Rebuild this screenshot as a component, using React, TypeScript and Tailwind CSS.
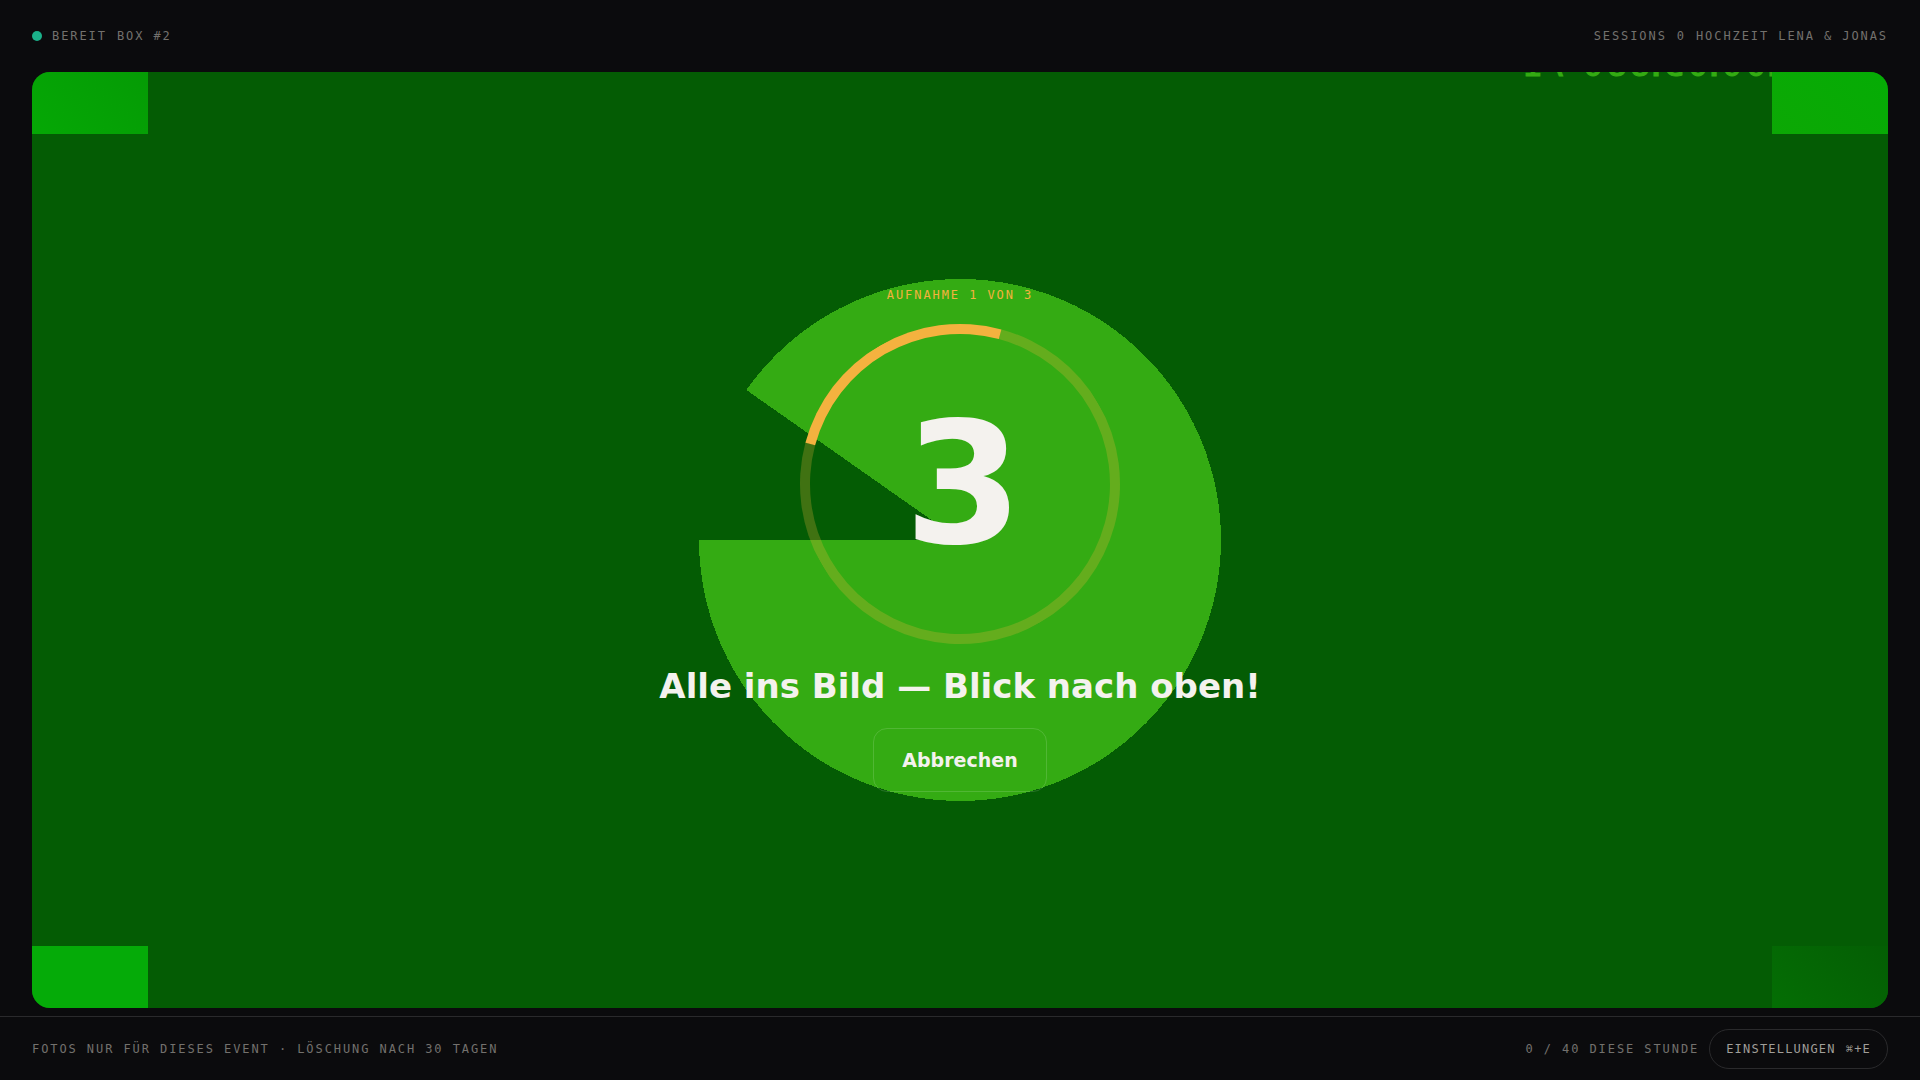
// Clock burned into the feed, one x per character because the digits are spaced wider than the separators
const CLOCK = "0:00:05.880 71";
const CLOCK_X = "-1787 -1772 -1756 -1732 -1714 -1698 -1674 -1656 -1640 -1617 -1593 -1575 -1558 -1534";

function CameraFeed() {
  return (
    <>
      {/* Mirrored clock, mostly cropped by the top edge */}
      <svg
        className="absolute top-0 right-0 h-2 w-[380px]"
        viewBox="1508 72 380 8"
        aria-hidden="true"
      >
        <text
          x={CLOCK_X}
          y="76"
          transform="scale(-1 1)"
          textAnchor="middle"
          className="fill-[#34ab13] stroke-[#34ab13] stroke-1 font-['DejaVu_Sans_Mono',monospace] text-[34px]"
        >
          {CLOCK}
        </text>
      </svg>

      {/* Calibration corners */}
      <div className="absolute top-0 left-0 h-[62px] w-[116px] bg-linear-45 from-[#05a805] to-[#059b05]" />
      <div className="absolute top-0 right-0 h-[62px] w-[116px] bg-linear-45 from-[#0ca805] to-[#05ac05]" />
      <div className="absolute bottom-0 left-0 h-[62px] w-[116px] bg-[#05ab08]" />
      <div className="absolute right-0 bottom-0 h-[62px] w-[116px] bg-linear-45 from-[#046e04] to-[#045e04]" />

      {/* Sweep disc */}
      <svg
        className="absolute top-1/2 left-1/2 size-[522px] -translate-x-1/2 -translate-y-1/2"
        viewBox="-261 -261 522 522"
        shapeRendering="crispEdges"
        aria-hidden="true"
      >
        <path d="M0 0 L-213.6 -150 A261 261 0 1 1 -261 0 Z" fill="#34ab13" />
      </svg>
    </>
  );
}

function Countdown() {
  return (
    <div className="relative flex flex-col items-center gap-[22px] text-[#f4f2ee]">
      <p className="font-['DejaVu_Sans_Mono',monospace] text-[12px] leading-[14px] tracking-[0.16em] text-[#f4b23f] uppercase">
        Aufnahme 1 von 3
      </p>
      <div className="relative grid size-80 place-items-center">
        <div className="absolute inset-0 -rotate-30 rounded-full border-10 border-[#f4b23f]/25 border-t-[#f4b23f]" />
        <span className="text-[170px] leading-none font-bold tracking-[-0.04em]">3</span>
      </div>
      <h1 className="text-[34px] leading-10 font-bold">Alle ins Bild — Blick nach oben!</h1>
      <button
        type="button"
        className="h-16 rounded-[14px] border border-white/14 px-7 text-[19px] leading-[22px] font-bold"
      >
        Abbrechen
      </button>
    </div>
  );
}

export default function App() {
  return (
    <div className="flex min-h-screen flex-col bg-[#0b0b0d] font-['DejaVu_Sans',sans-serif] text-[#f4f2ee]">
      <header className="flex h-18 items-center justify-between px-8 font-['DejaVu_Sans_Mono',monospace] text-[12px] tracking-[0.16em] text-[#73716d] uppercase">
        <div className="flex items-center gap-[10px]">
          <span className="size-[10px] rounded-full bg-[#1bb18a]" />
          <span>Bereit</span>
          <span>Box #2</span>
        </div>
        <div className="flex items-center gap-[10px]">
          <span>Sessions</span>
          <span>0</span>
          <span>Hochzeit Lena &amp; Jonas</span>
        </div>
      </header>

      <main className="relative mx-8 mb-2 flex flex-1 items-center justify-center overflow-hidden rounded-[18px] bg-[#045c04]">
        <CameraFeed />
        <Countdown />
      </main>

      <footer className="flex h-16 items-center justify-between border-t border-[#2a2a2c] px-8 font-['DejaVu_Sans_Mono',monospace] text-[12px] tracking-[0.16em] text-[#73716d] uppercase">
        <span>Fotos nur für dieses Event · Löschung nach 30 Tagen</span>
        <div className="flex items-center gap-[10px]">
          <span>0 / 40 diese Stunde</span>
          <button
            type="button"
            className="flex h-10 items-center gap-[10px] rounded-full border border-[#2a2a2c] px-4 tracking-widest text-[#a09e99] uppercase"
          >
            <span>Einstellungen</span>
            <span>⌘+E</span>
          </button>
        </div>
      </footer>
    </div>
  );
}
